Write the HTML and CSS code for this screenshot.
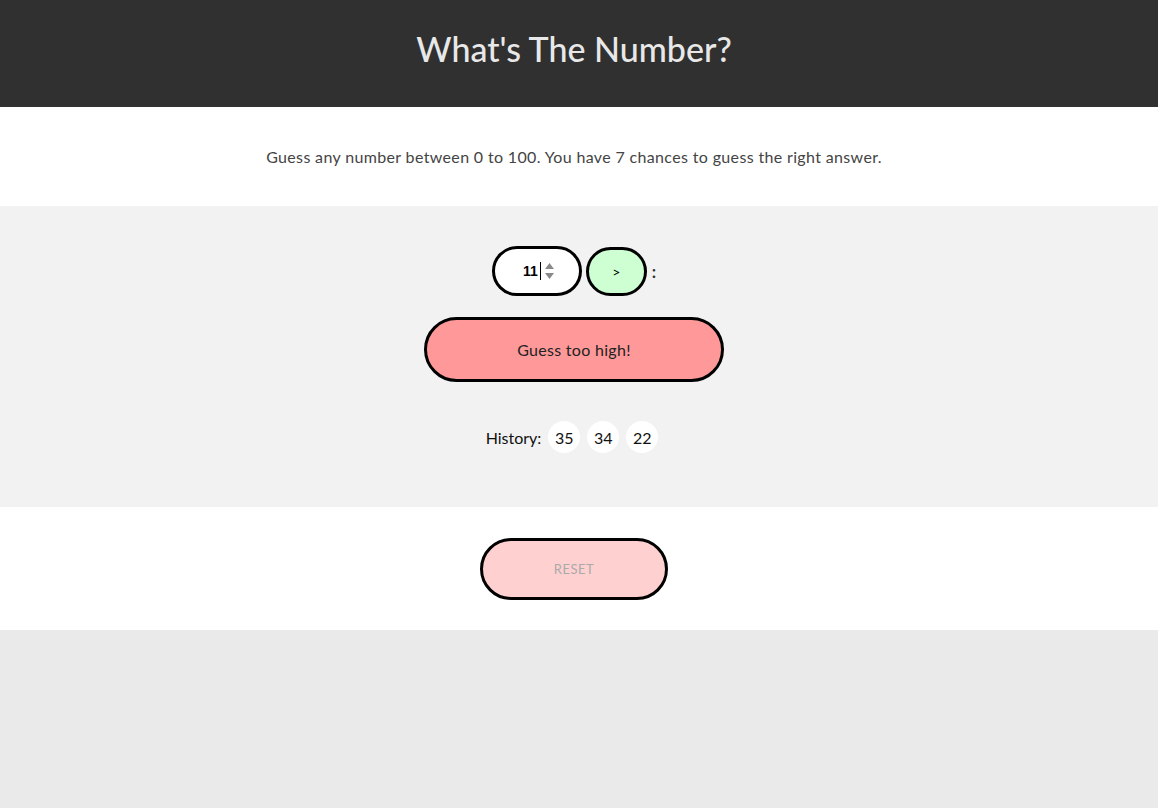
FILE: index.html
```html
<!DOCTYPE html>
<html lang="en">
<head>
<meta charset="utf-8">
<title>What's The Number?</title>
<link rel="stylesheet" href="styles.css">
</head>
<body>
<header class="header band">
  <h1 class="title">What's The Number?</h1>
</header>
<section class="intro band">
  <p class="intro-text">Guess any number between 0 to 100. You have 7 chances to guess the right answer.</p>
</section>
<section class="game band">
  <div class="guess-row">
    <div class="guess-input">
      <span class="guess-value">11</span><span class="caret"></span>
      <svg class="spinner" width="11" height="20" viewBox="0 0 11 20"><path d="M1 8 L5.5 2 L10 8 Z" fill="#8a8a8a"/><path d="M1 12 L5.5 18 L10 12 Z" fill="#8a8a8a"/></svg>
    </div>
    <button class="guess-btn" type="button">&gt;</button>
    <span class="colon">:</span>
  </div>
  <div class="result">Guess too high!</div>
  <div class="history">
    <span class="history-label">History:</span>
    <span class="chip">35</span>
    <span class="chip">34</span>
    <span class="chip">22</span>
  </div>
</section>
<section class="reset-area band">
  <button class="reset-btn" type="button">RESET</button>
</section>
</body>
</html>
```
FILE: styles.css
```css
html, body {
  margin: 0;
  padding: 0;
  height: 100%;
}
body {
  background: #eaeaea;
  font-family: Lato, "Open Sans", "Liberation Sans", sans-serif;
  color: #222;
}
.band {
  box-sizing: border-box;
  padding-right: 10px;
}
.header {
  background: #303030;
  height: 107px;
  display: flex;
  align-items: center;
  justify-content: center;
}
.title {
  margin: 0;
  color: #e8e8e8;
  font-size: 34px;
  font-weight: 500;
  letter-spacing: 0;
  padding-bottom: 10px;
}
.intro {
  background: #fff;
  height: 99px;
  display: flex;
  align-items: center;
  justify-content: center;
}
.intro-text {
  margin: 0;
  font-size: 16px;
  letter-spacing: 0.35px;
  color: #444;
  padding-bottom: 1px;
}
.game {
  background: #f2f2f2;
  height: 301px;
  padding-top: 40px;
  display: flex;
  flex-direction: column;
  align-items: center;
}
.guess-row {
  display: flex;
  align-items: center;
  gap: 4px;
  height: 50px;
}
.guess-input {
  box-sizing: border-box;
  width: 90px;
  height: 50px;
  border: 3px solid #000;
  border-radius: 25px;
  background: #fff;
  display: flex;
  align-items: center;
  justify-content: center;
  gap: 2px;
  font-family: "Liberation Sans", Arial, sans-serif;
  font-size: 14px;
  font-weight: 700;
  color: #000;
}
.guess-value {
  margin-left: 4px;
}
.caret {
  width: 1px;
  height: 18px;
  background: #000;
}
.spinner {
  margin-left: 1px;
}
.guess-btn {
  box-sizing: border-box;
  width: 61px;
  height: 49px;
  border: 3px solid #000;
  border-radius: 25px;
  background: #ceffd3;
  font-family: inherit;
  font-size: 14px;
  color: #000;
  padding: 0;
}
.colon {
  font-size: 17px;
  font-weight: 700;
  color: #333;
  margin-left: 1px;
}
.result {
  box-sizing: border-box;
  margin-top: 21px;
  width: 300px;
  height: 65px;
  border: 3px solid #000;
  border-radius: 33px;
  background: #ff9999;
  display: flex;
  align-items: center;
  justify-content: center;
  font-size: 16px;
  letter-spacing: 0.3px;
  color: #222;
}
.history {
  margin-top: 39px;
  display: flex;
  align-items: center;
  gap: 7px;
  font-size: 16px;
  color: #111;
  margin-left: -4px;
}
.chip {
  width: 32px;
  height: 32px;
  border-radius: 50%;
  background: #fff;
  display: flex;
  align-items: center;
  justify-content: center;
  font-size: 16px;
}
.reset-area {
  background: #fff;
  height: 123px;
  display: flex;
  align-items: center;
  justify-content: center;
}
.reset-btn {
  box-sizing: border-box;
  width: 188px;
  height: 62px;
  border: 3px solid #000;
  border-radius: 31px;
  background: #ffd0d0;
  font-family: inherit;
  font-size: 13px;
  letter-spacing: 0.5px;
  color: #aaa;
  padding: 0;
}
```
